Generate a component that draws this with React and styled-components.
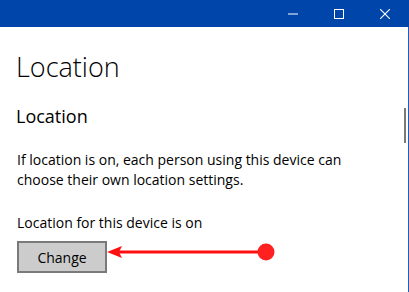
import React from "react";
import styled, { createGlobalStyle } from "styled-components";

const GlobalStyle = createGlobalStyle`
    html, body {
        margin: 0;
        padding: 0;
        background: #ffffff;
    }
    body {
        font-family: "Open Sans", "Noto Sans", "Liberation Sans", sans-serif;
        color: #000000;
    }
`

const Window = styled.div`
    width: 409px;
    height: 292px;
    display: flex;
    flex-direction: column;
    overflow: hidden;
`

const TitleBar = styled.div`
    height: 27px;
    flex: none;
    background: #0046aa;
    display: flex;
    justify-content: flex-end;
`

const CaptionButton = styled.div`
    width: 46px;
    height: 27px;
    display: flex;
    align-items: center;
    justify-content: center;
    margin-right: ${props => props.$last ? "1px" : "0"};
`

const Body = styled.div`
    position: relative;
    flex: 1;
    border-right: 1px solid #1c5cc4;
    padding: 0 16px;
`

const Heading = styled.h1`
    margin: 22px 0 0;
    font-size: 27px;
    font-weight: 300;
    line-height: 36px;
`

const SubHeading = styled.h2`
    margin: 19px 0 0;
    font-size: 18px;
    font-weight: 400;
    line-height: 24px;
`

const Paragraph = styled.p`
    margin: ${props => props.$top}px 0 0;
    font-size: 14px;
    line-height: 20px;
    padding-left: 1px;
`

const ButtonRow = styled.div`
    display: flex;
    align-items: flex-start;
    margin-top: 8px;
    padding-left: 1px;
`

const Button = styled.button`
    width: 90px;
    height: 32px;
    box-sizing: border-box;
    border: 2px solid #7a7a7a;
    background: #cccccc;
    font-family: inherit;
    font-size: 14px;
    color: #000000;
    padding: 0;
`

const ScrollThumb = styled.div`
    position: absolute;
    right: 2px;
    top: 81px;
    width: 2px;
    height: 35px;
    background: #7a7a7a;
`

const Minimize = () => (
    <svg width="10" height="10" viewBox="0 0 10 10">
        <rect x="0" y="4.5" width="10" height="1" fill="#fff"/>
    </svg>
)

const Maximize = () => (
    <svg width="10" height="10" viewBox="0 0 10 10">
        <rect x="0.5" y="0.5" width="9" height="9" fill="none" stroke="#fff" strokeWidth="1"/>
    </svg>
)

const Close = () => (
    <svg width="10" height="10" viewBox="0 0 10 10">
        <path d="M0 0 L10 10 M10 0 L0 10" stroke="#fff" strokeWidth="1.1"/>
    </svg>
)

const Pointer = () => (
    <svg width="170" height="32" viewBox="0 0 170 32">
        <line x1="10" y1="11" x2="160" y2="11" stroke="#ff1010" strokeWidth="3"/>
        <polygon points="0,11 15,5 12,11 15,17" fill="#ff1010"/>
        <circle cx="159" cy="11" r="8.5" fill="#ff2020"/>
    </svg>
)

const App = () => {
    return (
        <Window>
            <GlobalStyle/>
            <TitleBar>
                <CaptionButton><Minimize/></CaptionButton>
                <CaptionButton><Maximize/></CaptionButton>
                <CaptionButton $last><Close/></CaptionButton>
            </TitleBar>
            <Body>
                <Heading>Location</Heading>
                <SubHeading>Location</SubHeading>
                <Paragraph $top={22}>
                    If location is on, each person using this device can<br/>
                    choose their own location settings.
                </Paragraph>
                <Paragraph $top={23}>Location for this device is on</Paragraph>
                <ButtonRow>
                    <Button>Change</Button>
                    <Pointer/>
                </ButtonRow>
                <ScrollThumb/>
            </Body>
        </Window>
    )
};

export default App
